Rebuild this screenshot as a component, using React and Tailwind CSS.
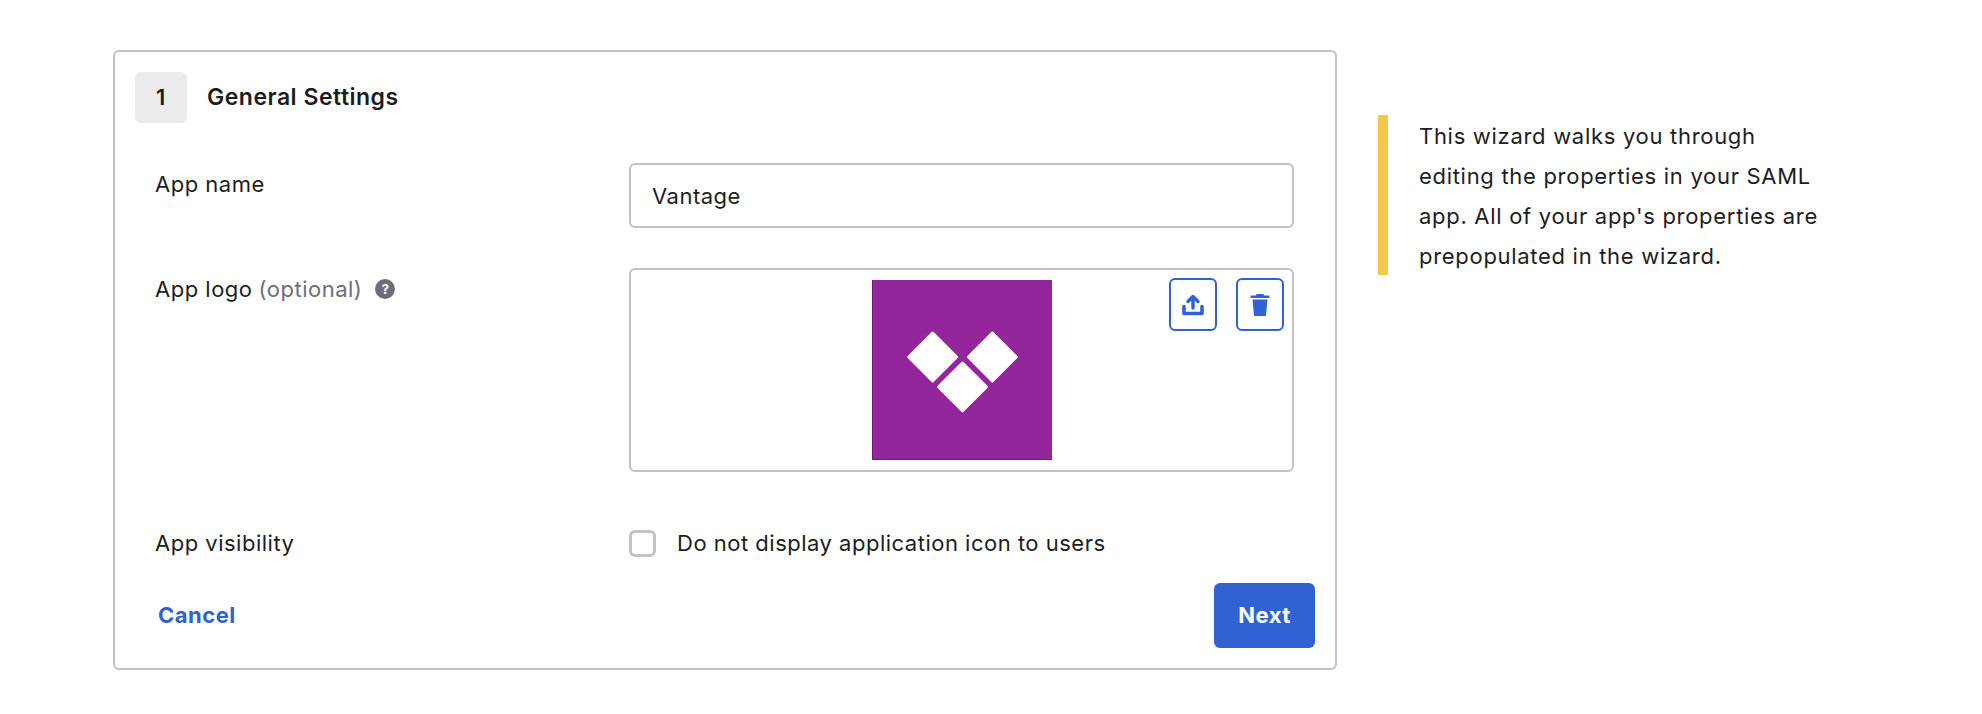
import React from "react";

const UploadIcon = () => (
  <svg width="22" height="22" viewBox="0 0 22 22" fill="none">
    <path d="M11 14V2.5M6 7.5L11 2.5L16 7.5" stroke="#3062d4" strokeWidth="3.4" strokeLinecap="round" strokeLinejoin="round" />
    <path d="M2 12.5V19.5H20V12.5" stroke="#3062d4" strokeWidth="3.6" strokeLinecap="round" strokeLinejoin="round" />
  </svg>
);

const TrashIcon = () => (
  <svg width="20" height="22" viewBox="0 0 20 22" fill="#3062d4">
    <path d="M6.5 0H13.5L14 1.5H19.5V4H0.5V1.5H6L6.5 0Z" />
    <path d="M2.5 5.5H17.5L16 21.5C16 21.8 15.8 22 15.5 22H4.5C4.2 22 4 21.8 4 21.5L2.5 5.5Z" />
  </svg>
);

const VantageLogo = () => (
  <div className="w-[180px] h-[180px] box-border bg-[#93269a] border-l border-b border-[#6f1d7a] shrink-0">
    <svg width="179" height="179" viewBox="0 0 180 180">
      <rect x="41.5" y="59" width="37" height="37" rx="1.5" fill="#fff" transform="rotate(45 60 77.5)" />
      <rect x="101.5" y="59" width="37" height="37" rx="1.5" fill="#fff" transform="rotate(45 120 77.5)" />
      <rect x="71.5" y="89" width="37" height="37" rx="1.5" fill="#fff" transform="rotate(45 90 107.5)" />
    </svg>
  </div>
);

const App = () => {
  return (
    <div className="flex items-start bg-white w-full min-h-[714px] pl-[113px] pt-[50px] [font-family:Inter,sans-serif] text-[#1d1d21] text-[22px] tracking-[0.5px]">
      {/* wizard card */}
      <div className="w-[1224px] h-[620px] shrink-0 border-2 border-[#c1c1c8] rounded-md p-5">
        <div className="flex items-center">
          <div className="w-[52px] h-[51px] bg-[#ebebed] rounded-md flex items-center justify-center font-semibold">
            1
          </div>
          <h2 className="ml-5 font-semibold text-[23px]">General Settings</h2>
        </div>

        <div className="mt-10 pl-5 grid grid-cols-[474px_665px]">
          <label className="leading-10 pt-px">App name</label>
          <input
            className="h-[65px] border-2 border-[#c1c1c8] rounded-md pl-[21px] outline-none"
            value="Vantage"
            readOnly
          />

          <label className="leading-10 pt-px mt-10 flex items-center self-start">
            App logo
            <span className="ml-[6px] text-[#6e6e78]">(optional)</span>
            <span className="ml-[13px] w-5 h-5 rounded-full bg-[#6e6e78] text-white text-[13px] font-bold leading-5 text-center tracking-normal">
              ?
            </span>
          </label>
          <div className="relative mt-10 h-[204px] border-2 border-[#c1c1c8] rounded-md flex justify-center pt-[10px]">
            <VantageLogo />
            <div className="absolute top-2 right-2 flex gap-[19px]">
              <button className="w-12 h-[53px] border-2 border-[#3062d4] rounded-md flex items-center justify-center">
                <UploadIcon />
              </button>
              <button className="w-12 h-[53px] border-2 border-[#3062d4] rounded-md flex items-center justify-center">
                <TrashIcon />
              </button>
            </div>
          </div>

          <label className="mt-[57px] h-7 flex items-center">App visibility</label>
          <div className="mt-[57px] h-7 flex items-center">
            <span className="w-[27px] h-[27px] border-[3px] border-[#c1c1c8] rounded-md" />
            <span className="ml-[21px]">Do not display application icon to users</span>
          </div>
        </div>

        <div className="mt-[26px] pl-[23px] flex items-center justify-between">
          <a className="text-[#3062d4] font-bold">Cancel</a>
          <button className="w-[101px] h-[65px] bg-[#3062d4] rounded-md text-white font-bold">
            Next
          </button>
        </div>
      </div>

      {/* help text */}
      <div className="ml-[41px] mt-[65px] w-[470px] h-40 border-l-[10px] border-[#f5c748] pl-[31px] pt-px leading-10 tracking-[0.7px]">
        <p>This wizard walks you through</p>
        <p>editing the properties in your SAML</p>
        <p>app. All of your app's properties are</p>
        <p>prepopulated in the wizard.</p>
      </div>
    </div>
  );
};

export default App;
